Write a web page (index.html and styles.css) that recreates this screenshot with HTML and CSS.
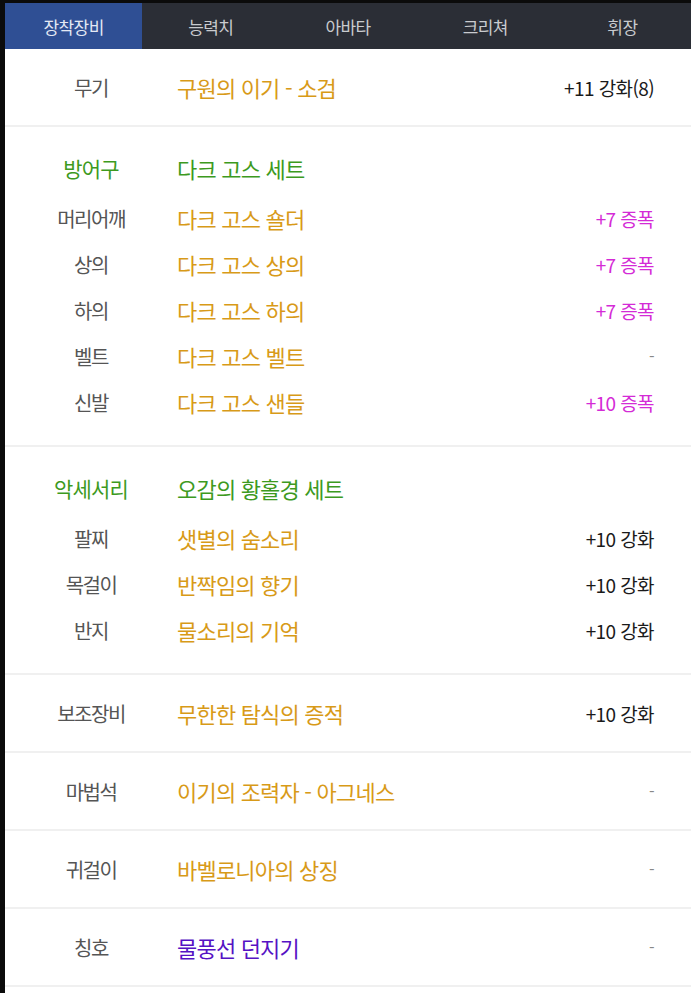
FILE: index.html
```html
<!DOCTYPE html>
<html lang="ko">
  <head>
    <meta charset="UTF-8" />
    <meta name="viewport" content="width=device-width, initial-scale=1.0" />
    <title>장착장비</title>
    <link rel="stylesheet" href="styles.css">
  </head>

  <body>
    <div class="screen">
      <nav class="tabs">
        <a class="tab active" href="#">장착장비</a>
        <a class="tab" href="#">능력치</a>
        <a class="tab" href="#">아바타</a>
        <a class="tab" href="#">크리쳐</a>
        <a class="tab" href="#">휘장</a>
      </nav>

      <main class="equip">
        <section class="group single">
          <div class="row">
            <span class="slot">무기</span>
            <span class="name epic">구원의 이기 - 소검</span>
            <span class="value">+11 강화(8)</span>
          </div>
        </section>

        <section class="group">
          <div class="row head">
            <span class="slot set">방어구</span>
            <span class="name set">다크 고스 세트</span>
            <span class="value"></span>
          </div>
          <div class="row">
            <span class="slot">머리어깨</span>
            <span class="name epic">다크 고스 숄더</span>
            <span class="value amp">+7 증폭</span>
          </div>
          <div class="row">
            <span class="slot">상의</span>
            <span class="name epic">다크 고스 상의</span>
            <span class="value amp">+7 증폭</span>
          </div>
          <div class="row">
            <span class="slot">하의</span>
            <span class="name epic">다크 고스 하의</span>
            <span class="value amp">+7 증폭</span>
          </div>
          <div class="row">
            <span class="slot">벨트</span>
            <span class="name epic">다크 고스 벨트</span>
            <span class="value none">-</span>
          </div>
          <div class="row">
            <span class="slot">신발</span>
            <span class="name epic">다크 고스 샌들</span>
            <span class="value amp">+10 증폭</span>
          </div>
        </section>

        <section class="group">
          <div class="row head">
            <span class="slot set">악세서리</span>
            <span class="name set">오감의 황홀경 세트</span>
            <span class="value"></span>
          </div>
          <div class="row">
            <span class="slot">팔찌</span>
            <span class="name epic">샛별의 숨소리</span>
            <span class="value">+10 강화</span>
          </div>
          <div class="row">
            <span class="slot">목걸이</span>
            <span class="name epic">반짝임의 향기</span>
            <span class="value">+10 강화</span>
          </div>
          <div class="row">
            <span class="slot">반지</span>
            <span class="name epic">물소리의 기억</span>
            <span class="value">+10 강화</span>
          </div>
        </section>

        <section class="group single">
          <div class="row">
            <span class="slot">보조장비</span>
            <span class="name epic">무한한 탐식의 증적</span>
            <span class="value">+10 강화</span>
          </div>
        </section>

        <section class="group single">
          <div class="row">
            <span class="slot">마법석</span>
            <span class="name epic">이기의 조력자 - 아그네스</span>
            <span class="value none">-</span>
          </div>
        </section>

        <section class="group single">
          <div class="row">
            <span class="slot">귀걸이</span>
            <span class="name epic">바벨로니아의 상징</span>
            <span class="value none">-</span>
          </div>
        </section>

        <section class="group single">
          <div class="row">
            <span class="slot">칭호</span>
            <span class="name unique">물풍선 던지기</span>
            <span class="value none">-</span>
          </div>
        </section>
      </main>
    </div>
  </body>
</html>
```

FILE: styles.css
```css
html,
body {
  margin: 0;
  padding: 0;
  background-color: #0b0b0b;
}

body {
  font-family: "Noto Sans CJK KR", "Noto Sans", sans-serif;
  padding: 3px 0 0 5px;
}

.screen {
  background-color: #fff;
  min-height: 990px;
}

.tabs {
  display: flex;
  height: 46px;
  background-color: #2b2e36;
}

.tab {
  flex: 1;
  display: flex;
  align-items: center;
  justify-content: center;
  color: #c9cbcf;
  font-size: 17px;
  letter-spacing: -0.6px;
  text-decoration: none;
}

.tab.active {
  background-color: #2f4f94;
  color: #e4e9f4;
}

.group {
  padding: 18px 0 20px;
  border-bottom: 2px solid #f0f0f0;
}

.group.single {
  padding: 15px 0;
}

.row {
  display: flex;
  align-items: center;
  height: 46px;
}

.row.head {
  margin-bottom: 4px;
}

.slot {
  width: 172px;
  text-align: center;
  color: #555;
  font-size: 20px;
  letter-spacing: -1.5px;
}

.slot.set {
  color: #3d9a1e;
  font-size: 21px;
  letter-spacing: -0.8px;
}

.name {
  flex: 1;
  font-size: 22px;
  letter-spacing: -0.8px;
}

.name.set {
  color: #3d9a1e;
}

.name.epic {
  color: #d89a18;
}

.name.unique {
  color: #5612c4;
}

.value {
  padding-right: 37px;
  font-size: 19px;
  letter-spacing: -0.6px;
  color: #1a1a1a;
}

.value.amp {
  color: #d42bd6;
}

.value.none {
  color: #888;
  font-size: 16px;
}
```
